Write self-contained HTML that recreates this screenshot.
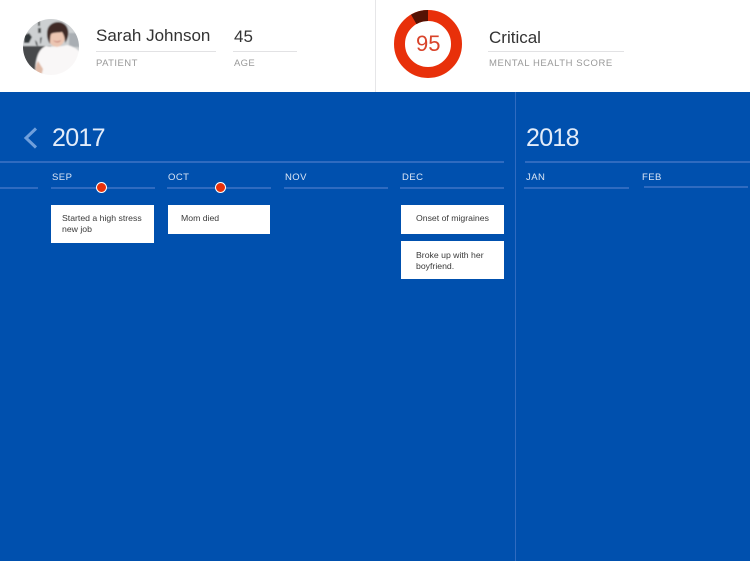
<!DOCTYPE html>
<html>
<head>
<meta charset="utf-8">
<style>
html,body{margin:0;padding:0;width:750px;height:561px;overflow:hidden;background:#fff;font-family:"Liberation Sans",sans-serif}
.a{position:absolute}
.t{position:absolute;white-space:nowrap;line-height:1}
.l{position:absolute;height:1px;background:#e2e2e4}
.b{position:absolute;height:2px;background:#2f6bc0}
.m{position:absolute;white-space:nowrap;line-height:1;font-size:9.5px;color:#dbe6f5;letter-spacing:.45px}
.c{position:absolute;background:#fff;color:#3a3a3a;font-size:8.7px;line-height:10.5px;box-sizing:border-box}
.d{position:absolute;width:9px;height:9px;border-radius:50%;background:#e8300a;border:1.5px solid #fff}
</style>
</head>
<body>
<div class="a" style="left:0;top:0;width:750px;height:561px;overflow:hidden">
<svg class="a" style="left:23px;top:19px" width="56" height="56" viewBox="0 0 56 56">
<defs><clipPath id="cp"><circle cx="28" cy="28" r="28"/></clipPath><filter id="bl"><feGaussianBlur stdDeviation="0.8"/></filter></defs>
<g clip-path="url(#cp)"><g filter="url(#bl)">
<rect x="-2" y="-2" width="60" height="60" fill="#cdd0d2"/>
<rect x="-2" y="27" width="30" height="31" fill="#47484b"/>
<rect x="46" y="14" width="12" height="14" fill="#a9aeb3"/>
<path d="M1 16l5-2 3 4-3 6-5 0z" fill="#33373a"/>
<path d="M15 2h2v5h-2zM15 9h3v5h-3zM12 21l2 2 1 4-2-1zM17 19l2-1-1 6-1 1z" fill="#4a4e50"/>
<path d="M12 58C12 40 15 30 23 27c5 1 15 1 21-1 6 1 12 5 14 9v23z" fill="#f9f7f7"/>
<path d="M15 42c-2 3-3 8-2 13l5 3 2-8z" fill="#dfb9a6"/>
<path d="M34 8c-6 0-9 4-9 9 0 6 3 10 9 11 5-1 8-5 8-11 0-5-3-9-8-9z" fill="#ecc6b2"/>
<path d="M27 25c-3-4-4-11-2-16 2-4 6-6 10-6 5 0 9 3 10 8 1 4 0 9-3 13 0-5-1-8-3-11-4 1-8 0-11 2-1 3-1 6-1 10z" fill="#3f2a25"/>
<path d="M30 21c2 2 6 2 8 0-1 3-6 3-8 0z" fill="#b65c5a"/>
</g></g>
</svg>
<div class="t" style="left:96px;top:27px;font-size:17px;color:#333">Sarah Johnson</div>
<div class="l" style="left:96px;top:51px;width:120px"></div>
<div class="t" style="left:96px;top:59px;font-size:9.5px;color:#999;letter-spacing:.45px">PATIENT</div>
<div class="t" style="left:234px;top:28px;font-size:17px;color:#333">45</div>
<div class="l" style="left:233px;top:51px;width:64px"></div>
<div class="t" style="left:234px;top:59px;font-size:9.5px;color:#999;letter-spacing:.3px">AGE</div>
<div class="a" style="left:375px;top:0;width:1px;height:92px;background:#e6e6e8"></div>
<svg class="a" style="left:393px;top:9px" width="70" height="70" viewBox="0 0 70 70">
<circle cx="35" cy="35" r="28.500" fill="none" stroke="#e8300a" stroke-width="11"/>
<path d="M35 1A34 34 0 0 0 18 5.600L23.500 15.100A23 23 0 0 1 35 12z" fill="#541204"/>
</svg>
<div class="t" style="left:416px;top:33px;font-size:22px;color:#d9432a">95</div>
<div class="t" style="left:489px;top:29px;font-size:17px;color:#333">Critical</div>
<div class="l" style="left:488px;top:51px;width:136px"></div>
<div class="t" style="left:489px;top:59px;font-size:9.5px;color:#999;letter-spacing:.55px">MENTAL HEALTH SCORE</div>
<div class="a" style="left:0;top:92px;width:750px;height:469px;background:#0050ae"></div>
<div class="a" style="left:515px;top:92px;width:1px;height:469px;background:#2f6bc0"></div>
<svg class="a" style="left:22px;top:126px" width="18" height="24" viewBox="0 0 18 24"><path d="M14 2.500L4 12l10 9.500" fill="none" stroke="#6f9fdc" stroke-width="3"/></svg>
<div class="t" style="left:52px;top:126px;font-size:25px;color:#e3ecf9;letter-spacing:-.7px">2017</div>
<div class="t" style="left:526px;top:126px;font-size:25px;color:#e3ecf9;letter-spacing:-.7px">2018</div>
<div class="b" style="left:0;top:161px;width:504px"></div>
<div class="b" style="left:525px;top:161px;width:225px"></div>
<div class="b" style="left:0;top:187px;width:38px"></div>
<div class="b" style="left:51px;top:187px;width:104px"></div>
<div class="b" style="left:167px;top:187px;width:104px"></div>
<div class="b" style="left:284px;top:187px;width:104px"></div>
<div class="b" style="left:400px;top:187px;width:104px"></div>
<div class="b" style="left:524px;top:187px;width:105px"></div>
<div class="b" style="left:644px;top:186px;width:104px"></div>
<div class="m" style="left:52px;top:173px">SEP</div>
<div class="m" style="left:168px;top:173px">OCT</div>
<div class="m" style="left:285px;top:173px">NOV</div>
<div class="m" style="left:402px;top:173px">DEC</div>
<div class="m" style="left:526px;top:173px">JAN</div>
<div class="m" style="left:642px;top:173px">FEB</div>
<div class="d" style="left:96px;top:182px"></div>
<div class="d" style="left:215px;top:182px"></div>
<div class="c" style="left:51px;top:205px;width:103px;height:38px;padding:8px 0 0 11px">Started a high stress<br>new job</div>
<div class="c" style="left:168px;top:205px;width:102px;height:29px;padding:8px 0 0 13px">Mom died</div>
<div class="c" style="left:401px;top:205px;width:103px;height:29px;padding:8px 0 0 15px">Onset of migraines</div>
<div class="c" style="left:401px;top:241px;width:103px;height:38px;padding:9px 0 0 15px">Broke up with her<br>boyfriend.</div>
</div>
</body>
</html>
